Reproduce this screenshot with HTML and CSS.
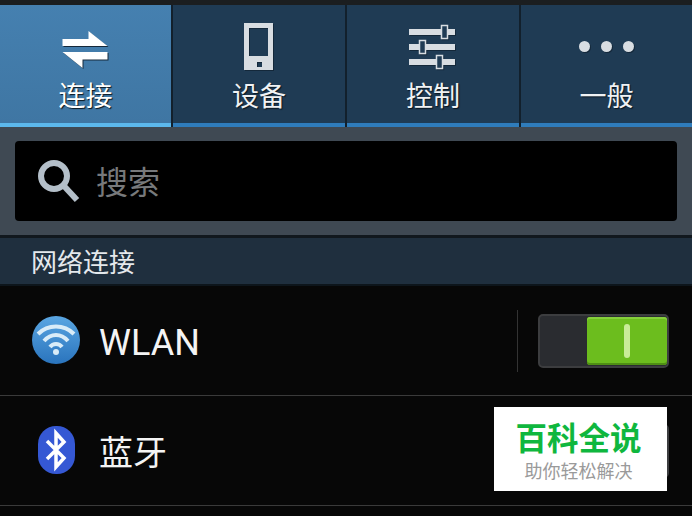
FILE: index.html
```html
<!DOCTYPE html>
<html lang="zh-CN">
<head>
    <meta charset="UTF-8">
    <title>设置</title>
    <link rel="stylesheet" href="styles.css">
</head>
<body>
    <div class="status-strip"></div>

    <nav class="tabs">
        <div class="tab active">
            <svg class="tab-icon" viewBox="0 0 60 48" width="60" height="48">
                <path d="M6.500 16H32.500V8L51.500 23H6.500Z M6.500 29H51.500V36.500H26.500V45Z" fill="#fff"/>
            </svg>
            <span>连接</span>
        </div>
        <div class="tab">
            <svg class="tab-icon" viewBox="0 0 60 48" width="60" height="48">
                <path fill-rule="evenodd" d="M15 0H44V47H15Z M20 5V33H39V5Z M28 39V44H33V39Z" fill="#d8dde2"/>
            </svg>
            <span>设备</span>
        </div>
        <div class="tab">
            <svg class="tab-icon" viewBox="0 0 60 48" width="60" height="48">
                <g fill="#d8dde2">
                    <rect x="6" y="6" width="46" height="6"/>
                    <rect x="6" y="21" width="46" height="6"/>
                    <rect x="6" y="36" width="46" height="6"/>
                </g>
                <g fill="#1f3b54" stroke="#d8dde2" stroke-width="1.500">
                    <rect x="38.500" y="2.500" width="6" height="13"/>
                    <rect x="16.500" y="17.500" width="6" height="13"/>
                    <rect x="33.500" y="32.500" width="6" height="13"/>
                </g>
            </svg>
            <span>控制</span>
        </div>
        <div class="tab">
            <svg class="tab-icon" viewBox="0 0 60 48" width="60" height="48">
                <g fill="#d8dde2">
                    <circle cx="7.500" cy="23.500" r="5.500"/>
                    <circle cx="29.500" cy="23.500" r="5.500"/>
                    <circle cx="51.500" cy="23.500" r="5.500"/>
                </g>
            </svg>
            <span>一般</span>
        </div>
    </nav>

    <div class="search-panel">
        <div class="search-box">
            <svg viewBox="0 0 44 44" width="44" height="44">
                <circle cx="17" cy="17" r="13" fill="none" stroke="#b4bfc9" stroke-width="6"/>
                <path d="M27 27L40 41" stroke="#b4bfc9" stroke-width="6"/>
            </svg>
            <span>搜索</span>
        </div>
    </div>

    <div class="section-title">网络连接</div>

    <div class="row">
        <svg class="row-icon" viewBox="0 0 50 50" width="50" height="50">
            <defs>
                <linearGradient id="wifiBg" x1="0" y1="0" x2="0" y2="1">
                    <stop offset="0" stop-color="#5aa6e2"/>
                    <stop offset="1" stop-color="#2a74bd"/>
                </linearGradient>
            </defs>
            <circle cx="25" cy="25" r="24" fill="url(#wifiBg)"/>
            <g fill="none" stroke="#d9ecf8" stroke-width="4">
                <path d="M7 19C17 9 33 9 43 19"/>
                <path d="M13 26C20 18 30 18 37 26"/>
                <path d="M19 32C22 28 28 28 31 32"/>
            </g>
            <circle cx="25" cy="37" r="3" fill="#d9ecf8"/>
        </svg>
        <span class="row-label latin">WLAN</span>
        <div class="row-end">
            <div class="row-sep"></div>
            <div class="switch"><div class="switch-knob"><i></i></div></div>
        </div>
    </div>

    <div class="row">
        <svg class="row-icon" viewBox="0 0 50 50" width="50" height="50">
            <rect x="7" y="1" width="37" height="48" rx="18" fill="#3558d4"/>
            <path d="M16 16L33 33L25 42V8L33 17L16 34" fill="none" stroke="#fff" stroke-width="3.500"/>
        </svg>
        <span class="row-label">蓝牙</span>
        <div class="row-end">
            <div class="row-sep hidden"></div>
            <div class="switch off"></div>
        </div>
    </div>

    <div class="watermark">
        <strong>百科全说</strong>
        <span>助你轻松解决</span>
    </div>
</body>
</html>
```

FILE: styles.css
```css
* {
    box-sizing: border-box;
}

html, body {
    height: 100%;
}

body {
    position: relative;
    margin: 0;
    overflow: hidden;
    background: #070707;
    color: #fff;
    font-family: "Roboto", "Noto Sans CJK SC", sans-serif;
}

.status-strip {
    height: 5px;
    background: #1b1e20;
}

.tabs {
    display: grid;
    grid-template-columns: 171px 172px 172px 1fr;
    gap: 2px;
    height: 122px;
    background: #12202c;
}

.tab {
    display: flex;
    flex-direction: column;
    align-items: center;
    padding-top: 18px;
    background: #1f3b54;
    border-bottom: 4px solid #2f7cbb;
}

.tab span {
    margin-top: 8px;
    font-size: 27px;
    line-height: 36px;
    color: #f0f2f4;
    text-shadow: 1px 1px 1px #0a1620;
}

.tab.active {
    background: linear-gradient(#4580b0, #3f76a3);
    border-bottom-color: #5cb8ec;
}

.tab.active span {
    color: #fff;
}

.tab-icon {
    display: block;
    filter: drop-shadow(1px 1px 0 #14283a);
}

.search-panel {
    height: 108px;
    padding: 14px 15px;
    background: #3f4953;
}

.search-box {
    display: flex;
    align-items: center;
    gap: 15px;
    height: 80px;
    padding-left: 22px;
    background: #000;
    border-radius: 4px;
}

.search-box span {
    margin-top: -2px;
    font-size: 32px;
    color: #77797b;
}

.section-title {
    height: 51px;
    padding: 7px 0 0 31px;
    font-size: 26px;
    line-height: 36px;
    color: #e4e8ec;
    background: #1f2f3e;
    border-top: 3px solid #11181e;
    border-bottom: 2px solid #0d151b;
}

.row {
    display: flex;
    align-items: center;
    height: 110px;
    padding: 0 23px 0 31px;
    border-bottom: 1px solid #3a3a3a;
}

.row-icon {
    flex: none;
    margin-top: -2px;
}

.row-label {
    margin-left: 18px;
    font-size: 34px;
    color: #f4f4f4;
}

.row-label.latin {
    padding-top: 5px;
    font-size: 36px;
}

.row-end {
    display: flex;
    align-items: center;
    gap: 20px;
    margin-left: auto;
}

.row-sep {
    width: 1px;
    height: 62px;
    background: #333;
}

.row-sep.hidden {
    visibility: hidden;
}

.switch {
    display: flex;
    justify-content: flex-end;
    width: 131px;
    height: 54px;
    padding: 1px 0 1px;
    background: #2a2c30;
    border: 2px solid #3c3d3f;
    border-radius: 5px;
}

.switch-knob {
    display: flex;
    align-items: center;
    justify-content: center;
    width: 80px;
    background: #6cbd1e;
    border-radius: 3px;
    box-shadow: inset 0 2px 0 #86cf3c, inset 0 -2px 0 #4f8f14;
}

.switch-knob i {
    display: block;
    width: 6px;
    height: 34px;
    background: #c9ec98;
    border-radius: 3px;
}

.watermark {
    position: absolute;
    left: 494px;
    top: 407px;
    display: flex;
    flex-direction: column;
    align-items: center;
    width: 173px;
    height: 84px;
    padding: 15px 4px 0 0;
    background: #fff;
}

.watermark strong {
    font-size: 31.500px;
    line-height: 36px;
    font-weight: 700;
    color: #0fb73e;
}

.watermark span {
    margin-top: 3px;
    font-size: 18px;
    line-height: 22px;
    color: #9a9a9a;
}
```
